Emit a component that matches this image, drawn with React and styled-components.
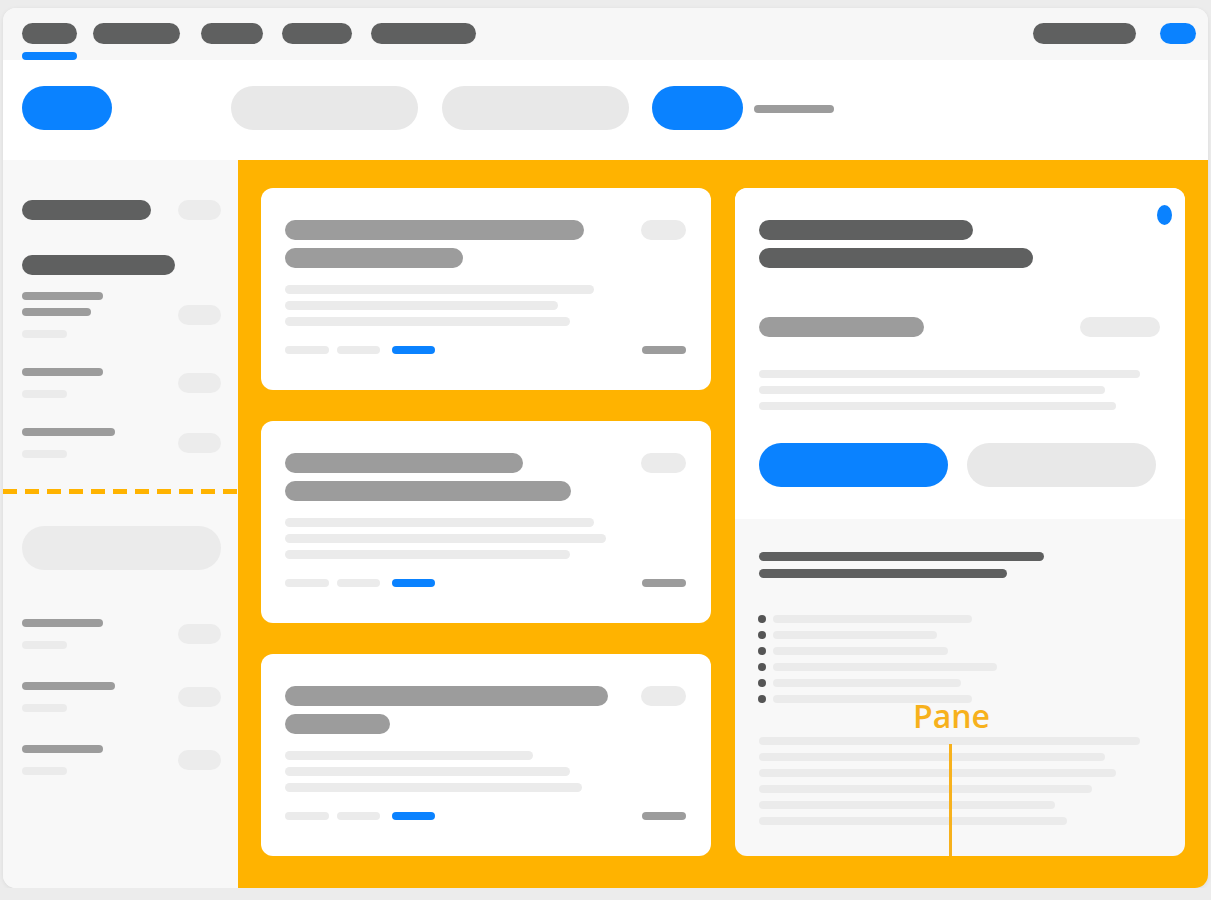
import React from 'react';
import styled, { createGlobalStyle } from 'styled-components';

const DARK = '#5f6060';
const MID = '#9c9c9c';
const LIGHT = '#ebebeb';
const BLUE = '#0a82ff';
const AMBER = '#ffb300';

const GlobalStyle = createGlobalStyle`
  html, body {
    margin: 0;
    background: #ececec;
    font-family: "Open Sans", "Liberation Sans", sans-serif;
  }
`;

const tones = { dark: DARK, mid: MID, light: LIGHT, blue: BLUE, soft: '#e8e8e8' };

// skeleton line / pill used everywhere in the wireframe
const Bar = styled.div`
  width: ${p => p.$w}px;
  height: ${p => p.$h || 8}px;
  border-radius: ${p => (p.$h || 8) / 2}px;
  background: ${p => tones[p.$tone || 'light']};
  flex-shrink: 0;
`;

const Window = styled.div`
  margin: 8px 3px 0 3px;
  height: 880px;
  border-radius: 13px;
  overflow: hidden;
  background: #f8f8f8;
  box-shadow: 0 1px 4px rgba(0, 0, 0, 0.08);
  display: flex;
  flex-direction: column;
`;

const TopBar = styled.div`
  height: 52px;
  flex-shrink: 0;
  background: #f7f7f7;
  display: flex;
  justify-content: space-between;
  padding: 0 12px 0 19px;
`;

const Tabs = styled.div`
  display: flex;
`;

const Tab = styled.div`
  display: flex;
  flex-direction: column;
  gap: 8px;
  padding-top: 15px;
  margin-left: ${p => p.$gap || 0}px;
`;

const Underline = styled.div`
  height: 8px;
  border-radius: 4px;
  background: ${p => (p.$active ? BLUE : 'transparent')};
`;

const TopActions = styled.div`
  display: flex;
  gap: 24px;
  padding-top: 15px;
`;

const HeaderRow = styled.div`
  height: 100px;
  flex-shrink: 0;
  box-sizing: border-box;
  background: #fff;
  display: flex;
  align-items: center;
  padding: 0 0 4px 19px;
`;

const Button = styled.div`
  width: ${p => p.$w}px;
  height: 44px;
  border-radius: 22px;
  background: ${p => (p.$primary ? BLUE : '#e8e8e8')};
  margin-left: ${p => p.$gap || 0}px;
  flex-shrink: 0;
`;

const HeaderHint = styled(Bar)`
  margin-left: 11px;
  margin-top: 2px;
`;

const Body = styled.div`
  flex: 1;
  display: grid;
  grid-template-columns: 235px 1fr;
  min-height: 0;
`;

const Sidebar = styled.aside`
  background: #f8f8f8;
  display: flex;
  flex-direction: column;
  padding: 40px 17px 0 19px;
`;

const SideRow = styled.div`
  display: flex;
  justify-content: space-between;
  align-items: center;
`;

const SideHeading = styled(Bar)`
  margin-top: 35px;
`;

const SideList = styled.div`
  display: flex;
  flex-direction: column;
  gap: ${p => p.$gap}px;
  margin-top: ${p => p.$top}px;
`;

const SideItem = styled(SideRow)``;

const SideText = styled.div`
  display: flex;
  flex-direction: column;
  gap: 8px;
`;

const SideSub = styled(Bar)`
  margin-top: 6px;
`;

const Chip = styled(Bar).attrs({ $w: 43, $h: 20 })`
  background: #ececec;
`;

const Divider = styled.div`
  margin: 31px -17px 0 -19px;
  height: 5px;
  background: repeating-linear-gradient(
    to right,
    ${AMBER} 0 14px,
    transparent 14px 22px
  );
`;

const SearchBox = styled.div`
  margin-top: 32px;
  height: 44px;
  border-radius: 22px;
  background: ${LIGHT};
`;

const Main = styled.main`
  background: ${AMBER};
  display: grid;
  grid-template-columns: 450px 450px;
  gap: 24px;
  padding: 28px 23px 32px 23px;
`;

const CardColumn = styled.div`
  display: flex;
  flex-direction: column;
  gap: 31px;
`;

const Card = styled.div`
  flex: 1;
  background: #fff;
  border-radius: 12px;
  padding: 32px 25px 0 24px;
  display: flex;
  flex-direction: column;
`;

const CardHead = styled.div`
  display: flex;
  justify-content: space-between;
  align-items: flex-start;
`;

const Stack = styled.div`
  display: flex;
  flex-direction: column;
  gap: ${p => p.$gap || 8}px;
  margin-top: ${p => p.$top || 0}px;
`;

const CardFooter = styled.div`
  display: flex;
  align-items: center;
  margin-top: 20px;
  gap: 8px;

  & > :nth-child(3) {
    margin-left: 4px;
  }
  & > :last-child {
    margin-left: auto;
  }
`;

const Pane = styled.section`
  position: relative;
  background: #f8f8f8;
  border-radius: 12px;
  overflow: hidden;
  display: flex;
  flex-direction: column;
`;

const PaneTop = styled.div`
  position: relative;
  background: #fff;
  padding: 32px 25px 32px 24px;
`;

const Dot = styled.span`
  position: absolute;
  top: 17px;
  right: 13px;
  width: 15px;
  height: 20px;
  border-radius: 50%;
  background: ${BLUE};
`;

const MetaRow = styled.div`
  display: flex;
  justify-content: space-between;
  margin-top: 49px;
`;

const Actions = styled.div`
  display: flex;
  gap: 19px;
  margin-top: 33px;
`;

const PaneBottom = styled.div`
  flex: 1;
  padding: 33px 24px 0 24px;
`;

const BulletList = styled.ul`
  list-style: none;
  margin: 37px 0 0 0;
  padding: 0;
  display: flex;
  flex-direction: column;
  gap: 8px;
`;

const Bullet = styled.li`
  display: flex;
  align-items: center;
  gap: 7px;
  height: 8px;

  &::before {
    content: '';
    width: 8px;
    height: 8px;
    margin-left: -1px;
    border-radius: 50%;
    background: #555;
  }
`;

const Callout = styled.div`
  position: absolute;
  bottom: 0;
  left: 215px;
  transform: translateX(-50%);
  display: flex;
  flex-direction: column;
  align-items: center;
  color: #f7b11c;
`;

const CalloutLabel = styled.span`
  font-size: 32px;
  line-height: 32px;
  font-weight: 600;
  margin-left: 3px;
`;

const CalloutStem = styled.span`
  width: 3px;
  height: 112px;
  margin-top: 12px;
  background: #f7b11c;
`;

const tabs = [
  { w: 55, gap: 0 },
  { w: 87, gap: 16 },
  { w: 62, gap: 21 },
  { w: 70, gap: 19 },
  { w: 105, gap: 19 },
];

const sideTop = [{ title: [81, 69] }, { title: [81] }, { title: [93] }];
const sideBottom = [{ title: [81] }, { title: [93] }, { title: [81] }];

const cards = [
  { titles: [299, 178], lines: [309, 273, 285] },
  { titles: [238, 286], lines: [309, 321, 285] },
  { titles: [323, 105], lines: [248, 285, 297] },
];

const bullets = [199, 164, 175, 224, 188, 199];
const paragraph = [381, 346, 357, 333, 296, 308];

function SideGroup({ items, top, gap }) {
  return (
    <SideList $top={top} $gap={gap}>
      {items.map((it, i) => (
        <SideItem key={i}>
          <SideText>
            {it.title.map((w, j) => (
              <Bar key={j} $w={w} $tone="mid" />
            ))}
            <SideSub $w={45} />
          </SideText>
          <Chip />
        </SideItem>
      ))}
    </SideList>
  );
}

export default function App() {
  return (
    <>
      <GlobalStyle />
      <Window>
        <TopBar>
          <Tabs>
            {tabs.map((t, i) => (
              <Tab key={i} $gap={t.gap}>
                <Bar $w={t.w} $h={21} $tone="dark" />
                <Underline $active={i === 0} />
              </Tab>
            ))}
          </Tabs>
          <TopActions>
            <Bar $w={103} $h={21} $tone="dark" />
            <Bar $w={36} $h={21} $tone="blue" />
          </TopActions>
        </TopBar>

        <HeaderRow>
          <Button $w={90} $primary />
          <Button $w={187} $gap={119} />
          <Button $w={187} $gap={24} />
          <Button $w={91} $gap={23} $primary />
          <HeaderHint $w={80} $tone="mid" />
        </HeaderRow>

        <Body>
          <Sidebar>
            <SideRow>
              <Bar $w={129} $h={20} $tone="dark" />
              <Chip />
            </SideRow>
            <SideHeading $w={153} $h={20} $tone="dark" />
            <SideGroup items={sideTop} top={17} gap={30} />
            <Divider />
            <SearchBox />
            <SideGroup items={sideBottom} top={49} gap={33} />
          </Sidebar>

          <Main>
            <CardColumn>
              {cards.map((c, i) => (
                <Card key={i}>
                  <CardHead>
                    <Stack>
                      {c.titles.map((w, j) => (
                        <Bar key={j} $w={w} $h={20} $tone="mid" />
                      ))}
                    </Stack>
                    <Bar $w={45} $h={20} />
                  </CardHead>
                  <Stack $top={17} $gap={7}>
                    {c.lines.map((w, j) => (
                      <Bar key={j} $w={w} $h={9} />
                    ))}
                  </Stack>
                  <CardFooter>
                    <Bar $w={44} />
                    <Bar $w={43} />
                    <Bar $w={43} $tone="blue" />
                    <Bar $w={44} $tone="mid" />
                  </CardFooter>
                </Card>
              ))}
            </CardColumn>

            <Pane>
              <PaneTop>
                <Dot />
                <Stack>
                  <Bar $w={214} $h={20} $tone="dark" />
                  <Bar $w={274} $h={20} $tone="dark" />
                </Stack>
                <MetaRow>
                  <Bar $w={165} $h={20} $tone="mid" />
                  <Bar $w={80} $h={20} />
                </MetaRow>
                <Stack $top={33}>
                  <Bar $w={381} />
                  <Bar $w={346} />
                  <Bar $w={357} />
                </Stack>
                <Actions>
                  <Button $w={189} $primary />
                  <Button $w={189} />
                </Actions>
              </PaneTop>
              <PaneBottom>
                <Stack>
                  <Bar $w={285} $h={9} $tone="dark" />
                  <Bar $w={248} $h={9} $tone="dark" />
                </Stack>
                <BulletList>
                  {bullets.map((w, i) => (
                    <Bullet key={i}>
                      <Bar $w={w} />
                    </Bullet>
                  ))}
                </BulletList>
                <Stack $top={34}>
                  {paragraph.map((w, i) => (
                    <Bar key={i} $w={w} />
                  ))}
                </Stack>
              </PaneBottom>
              <Callout>
                <CalloutLabel>Pane</CalloutLabel>
                <CalloutStem />
              </Callout>
            </Pane>
          </Main>
        </Body>
      </Window>
    </>
  );
}
